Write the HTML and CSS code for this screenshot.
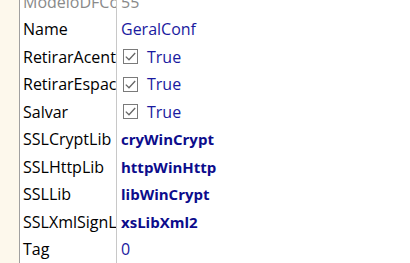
FILE: index.html
```html
<!DOCTYPE html>
<html>
<head>
<meta charset="utf-8">
<link rel="stylesheet" href="styles.css">
</head>
<body>
<div class="inspector">
  <div class="gutter"></div>
  <div class="grid">
    <div class="row cut"><div class="name dim">ModeloDFCo</div><div class="value dim">55</div></div>
    <div class="row"><div class="name">Name</div><div class="value">GeralConf</div></div>
    <div class="row"><div class="name">RetirarAcentos</div><div class="value"><span class="check"><svg width="15" height="15" viewBox="0 0 15 15"><rect x="0.5" y="0.5" width="14" height="14" fill="#fff" stroke="#7a7a7a"/><path d="M2.8 7.6 L6 10.8 L12.2 4" fill="none" stroke="#666" stroke-width="1.3"/></svg></span>True</div></div>
    <div class="row"><div class="name">RetirarEspacos</div><div class="value"><span class="check"><svg width="15" height="15" viewBox="0 0 15 15"><rect x="0.5" y="0.5" width="14" height="14" fill="#fff" stroke="#7a7a7a"/><path d="M2.8 7.6 L6 10.8 L12.2 4" fill="none" stroke="#666" stroke-width="1.3"/></svg></span>True</div></div>
    <div class="row"><div class="name">Salvar</div><div class="value"><span class="check"><svg width="15" height="15" viewBox="0 0 15 15"><rect x="0.5" y="0.5" width="14" height="14" fill="#fff" stroke="#7a7a7a"/><path d="M2.8 7.6 L6 10.8 L12.2 4" fill="none" stroke="#666" stroke-width="1.3"/></svg></span>True</div></div>
    <div class="row"><div class="name">SSLCryptLib</div><div class="value bold">cryWinCrypt</div></div>
    <div class="row"><div class="name">SSLHttpLib</div><div class="value bold">httpWinHttp</div></div>
    <div class="row"><div class="name">SSLLib</div><div class="value bold">libWinCrypt</div></div>
    <div class="row"><div class="name">SSLXmlSignLib</div><div class="value bold">xsLibXml2</div></div>
    <div class="row"><div class="name">Tag</div><div class="value">0</div></div>
  </div>
</div>
</body>
</html>
```
FILE: styles.css
```css
html, body {
  margin: 0;
  padding: 0;
  background: #fff;
}
.inspector {
  display: flex;
  width: 410px;
  height: 263px;
  overflow: hidden;
  font-family: "Open Sans", "Noto Sans", sans-serif;
  font-size: 16px;
}
.gutter {
  width: 19px;
  flex: none;
  background: #fdf8ec;
  border-right: 1px solid #a0a0a0;
}
.grid {
  flex: 1;
  display: flex;
  flex-direction: column;
  margin-top: -12px;
}
.row {
  display: flex;
  height: 27.5px;
  align-items: center;
  flex: none;
}
.name {
  width: 93px;
  padding-left: 3px;
  flex: none;
  overflow: hidden;
  white-space: nowrap;
  color: #000;
  border-right: 1px solid #c8c8c8;
  height: 100%;
  display: flex;
  align-items: center;
}
.value {
  padding-left: 4px;
  color: #1a1aa0;
  white-space: nowrap;
  display: flex;
  align-items: center;
}
.dim {
  color: #8a8a8a;
}
.bold {
  font-weight: 700;
  font-size: 15px;
  color: #0c0c8c;
}
.check {
  display: inline-flex;
  margin-right: 9px;
  margin-left: 2px;
}
```
